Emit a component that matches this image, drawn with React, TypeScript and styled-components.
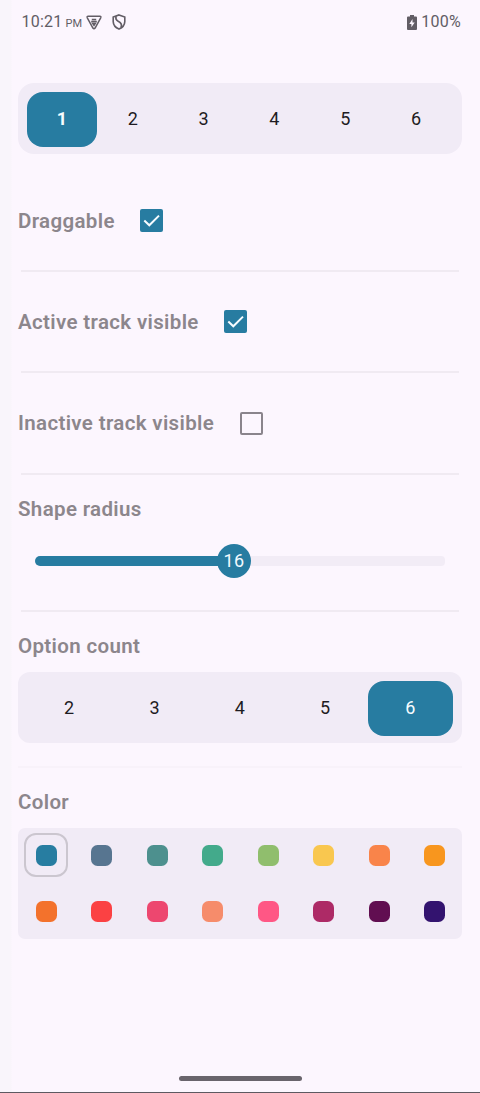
import React from "react";
import styled, { createGlobalStyle } from "styled-components";

const ACCENT = "#277ca1";
const PANEL = "#f1ebf6";

const GlobalStyle = createGlobalStyle`
  * { box-sizing: border-box; }
  html, body { margin: 0; padding: 0; background: #fcf6fe; }
  body { font-family: Roboto, "Liberation Sans", sans-serif; }
`;

const Screen = styled.main`
  width: 480px;
  height: 1093px;
  display: flex;
  flex-direction: column;
  overflow: hidden;
  background: linear-gradient(to right, #f9f5fb 11px, #fcf6fe 12px);
  border-bottom: 1px solid #5d5961;
`;

const StatusBar = styled.header`
  height: 44px;
  flex: none;
  display: flex;
  align-items: center;
  padding: 0 19px 0 21.5px;
  color: #625d65;
  font-size: 16px;
  letter-spacing: 0.25px;
  line-height: 20px;
`;

const Meridiem = styled.span`
  font-size: 11px;
  letter-spacing: 0;
  margin: 3px 4px 0 3px;
`;

const StatusIcon = styled.svg<{ $gap?: number }>`
  flex: none;
  margin-right: ${(p) => p.$gap ?? 0}px;
`;

const Spacer = styled.div`
  flex: 1;
`;

const Content = styled.div`
  flex: 1;
  display: flex;
  flex-direction: column;
  padding: 39px 18px 0;
`;

const Segmented = styled.div<{ $right: number; $radius: number; $top: number; $bottom: number }>`
  flex: none;
  height: 71px;
  display: flex;
  margin: ${(p) => p.$top}px 0 ${(p) => p.$bottom}px;
  padding: 9px ${(p) => p.$right}px 7.5px 8.5px;
  border-radius: ${(p) => p.$radius}px;
  background: ${PANEL};
`;

const Segment = styled.button<{ $active: boolean; $bold?: boolean }>`
  flex: 1;
  border: 0;
  padding: 0 0 ${(p) => (p.$active ? 1 : 2)}px;
  border-radius: 16px;
  background: ${(p) => (p.$active ? ACCENT : "transparent")};
  color: ${(p) => (p.$active ? "#f6fcff" : "#1e1b22")};
  font: ${(p) => (p.$active && p.$bold ? 700 : 400)} 18px Roboto, sans-serif;
`;

const Title = styled.h2<{ $top?: number }>`
  flex: none;
  margin: ${(p) => p.$top ?? 0}px 0 0;
  height: 24px;
  line-height: 24px;
  font-size: 20.5px;
  font-weight: 600;
  letter-spacing: 0.35px;
  color: #8c868c;
  white-space: nowrap;
`;

const OptionRow = styled.label<{ $height: number; $top?: number }>`
  flex: none;
  display: flex;
  align-items: center;
  gap: 25.5px;
  margin-top: ${(p) => p.$top ?? 0}px;
  height: ${(p) => p.$height}px;
`;

const Box = styled.span<{ $checked: boolean }>`
  width: 23px;
  height: 23px;
  display: flex;
  border-radius: 2px;
  background: ${(p) => (p.$checked ? ACCENT : "transparent")};
  border: ${(p) => (p.$checked ? "0" : "2px solid #8a848c")};
`;

const Divider = styled.hr<{ $faint?: boolean }>`
  flex: none;
  width: ${(p) => (p.$faint ? 444 : 438)}px;
  height: 2px;
  border: 0;
  margin: 0 auto;
  background: ${(p) => (p.$faint ? "#f8f2fa" : "#f0eaf2")};
`;

const Slider = styled.div`
  flex: none;
  height: 34px;
  display: flex;
  align-items: center;
  margin: 23px 17px 32px 16.5px;
`;

const Track = styled.div<{ $active?: boolean }>`
  height: 10px;
  ${(p) => (p.$active ? "width: 183.5px;" : "flex: 1;")}
  border-radius: ${(p) => (p.$active ? "5px 0 0 5px" : "0 4px 4px 0")};
  margin: ${(p) => (p.$active ? "0 -1px 0 0" : "0 0 0 -1px")};
  background: ${(p) => (p.$active ? ACCENT : "#f2ecf6")};
`;

const Thumb = styled.div`
  flex: none;
  width: 34px;
  height: 34px;
  border-radius: 50%;
  background: ${ACCENT};
  color: #f2faff;
  font-size: 18px;
  letter-spacing: 0.3px;
  line-height: 33px;
  text-align: center;
  z-index: 1;
`;

const Palette = styled.div`
  flex: none;
  height: 111px;
  margin-top: 14px;
  display: grid;
  grid-template-columns: repeat(8, 55.5px);
  grid-template-rows: repeat(2, 56px);
  align-content: end;
  padding-bottom: 0;
  border-radius: 7px;
  background: ${PANEL};
`;

const Swatch = styled.button<{ $selected: boolean }>`
  width: 44px;
  height: 44px;
  padding: 0 0 0 0.5px;
  display: flex;
  align-items: center;
  justify-content: center;
  place-self: center;
  border: 2px solid ${(p) => (p.$selected ? "#cbc6cf" : "transparent")};
  border-radius: 12px;
  background: transparent;
`;

const Chip = styled.span<{ $color: string }>`
  width: 21px;
  height: 21px;
  border-radius: 6.5px;
  background: ${(p) => p.$color};
`;

const HomeBar = styled.div`
  flex: none;
  width: 123px;
  height: 5px;
  margin: 0 auto 11px;
  border-radius: 3px;
  background: #69646c;
`;

const colors = [
  "#277da1", "#577590", "#4d908e", "#43aa8b", "#90be6d", "#f9c74f", "#f9844a", "#f8961e",
  "#f3722c", "#fb4143", "#ed476f", "#f68c6b", "#ff5785", "#ad2a66", "#610e51", "#33136f",
];

function CheckBox({ checked }: { checked: boolean }) {
  return (
    <Box $checked={checked}>
      {checked && (
        <svg width="23" height="23" viewBox="0 0 23 23" fill="none" stroke="#f7fcff" strokeWidth="2">
          <path d="M4.3 11.5 L9.3 16.3 L19 6.6" />
        </svg>
      )}
    </Box>
  );
}

type OptionsProps = {
  values: number[];
  active: number;
  bold?: boolean;
  right: number;
  radius: number;
  top?: number;
  bottom?: number;
};

function Options({ values, active, bold, right, radius, top = 0, bottom = 0 }: OptionsProps) {
  return (
    <Segmented $right={right} $radius={radius} $top={top} $bottom={bottom}>
      {values.map((v) => (
        <Segment key={v} $active={v === active} $bold={bold}>{v}</Segment>
      ))}
    </Segmented>
  );
}

export default function App() {
  return (
    <>
      <GlobalStyle />
      <Screen>
        <StatusBar>
          <span>10:21</span>
          <Meridiem>PM</Meridiem>
          <StatusIcon $gap={9.5} width="16" height="15" viewBox="0 0 16 15" fill="none" stroke="currentColor">
            <path d="M2.2 1.2H13.8Q15.4 1.3 14.7 2.8L9.1 13Q8 14.4 6.9 13L1.3 2.8Q.6 1.3 2.2 1.2Z" strokeWidth="1.5" />
            <path d="M5.8 4.4H10.2M5.2 6.5H10.8" strokeWidth="1.5" />
            <path d="M5.2 7.4H10.8L8 11.8Z" fill="currentColor" stroke="none" />
          </StatusIcon>
          <StatusIcon width="14" height="16" viewBox="0 0 14 16" fill="none" stroke="currentColor" strokeWidth="1.6">
            <path d="M7 .9L12.8 3V7.6Q12.6 12.6 7 15.1Q1.4 12.6 1.2 7.6V3Z" />
            <path d="M4.2 2.2Q3 5.4 6.2 7.2Q10.8 9.6 9 13.4" strokeWidth="1.7" />
          </StatusIcon>
          <Spacer />
          <StatusIcon $gap={4} width="10" height="15" viewBox="0 0 10 15">
            <path d="M3 0H7V1.5H9Q10 1.5 10 2.5V14Q10 15 9 15H1Q0 15 0 14V2.5Q0 1.5 1 1.5H3Z" fill="currentColor" />
            <path d="M5.5 4L2.3 9H4.4V12.2L7.7 7.4H5.5Z" fill="#fcf6fe" />
          </StatusIcon>
          <span>100%</span>
        </StatusBar>

        <Content>
          <Options values={[1, 2, 3, 4, 5, 6]} active={1} bold right={10.5} radius={16} />

          <OptionRow $height={99} $top={17}>
            <Title>Draggable</Title>
            <CheckBox checked />
          </OptionRow>
          <Divider />
          <OptionRow $height={99}>
            <Title>Active track visible</Title>
            <CheckBox checked />
          </OptionRow>
          <Divider />
          <OptionRow $height={100}>
            <Title>Inactive track visible</Title>
            <CheckBox checked={false} />
          </OptionRow>
          <Divider />

          <Title $top={22}>Shape radius</Title>
          <Slider>
            <Track $active />
            <Thumb>16</Thumb>
            <Track />
          </Slider>
          <Divider />

          <Title $top={22}>Option count</Title>
          <Options values={[2, 3, 4, 5, 6]} active={6} right={9} radius={12} top={14} bottom={23} />
          <Divider $faint />

          <Title $top={22}>Color</Title>
          <Palette>
            {colors.map((c, i) => (
              <Swatch key={c} $selected={i === 0}>
                <Chip $color={c} />
              </Swatch>
            ))}
          </Palette>
        </Content>
        <HomeBar />
      </Screen>
    </>
  );
}
